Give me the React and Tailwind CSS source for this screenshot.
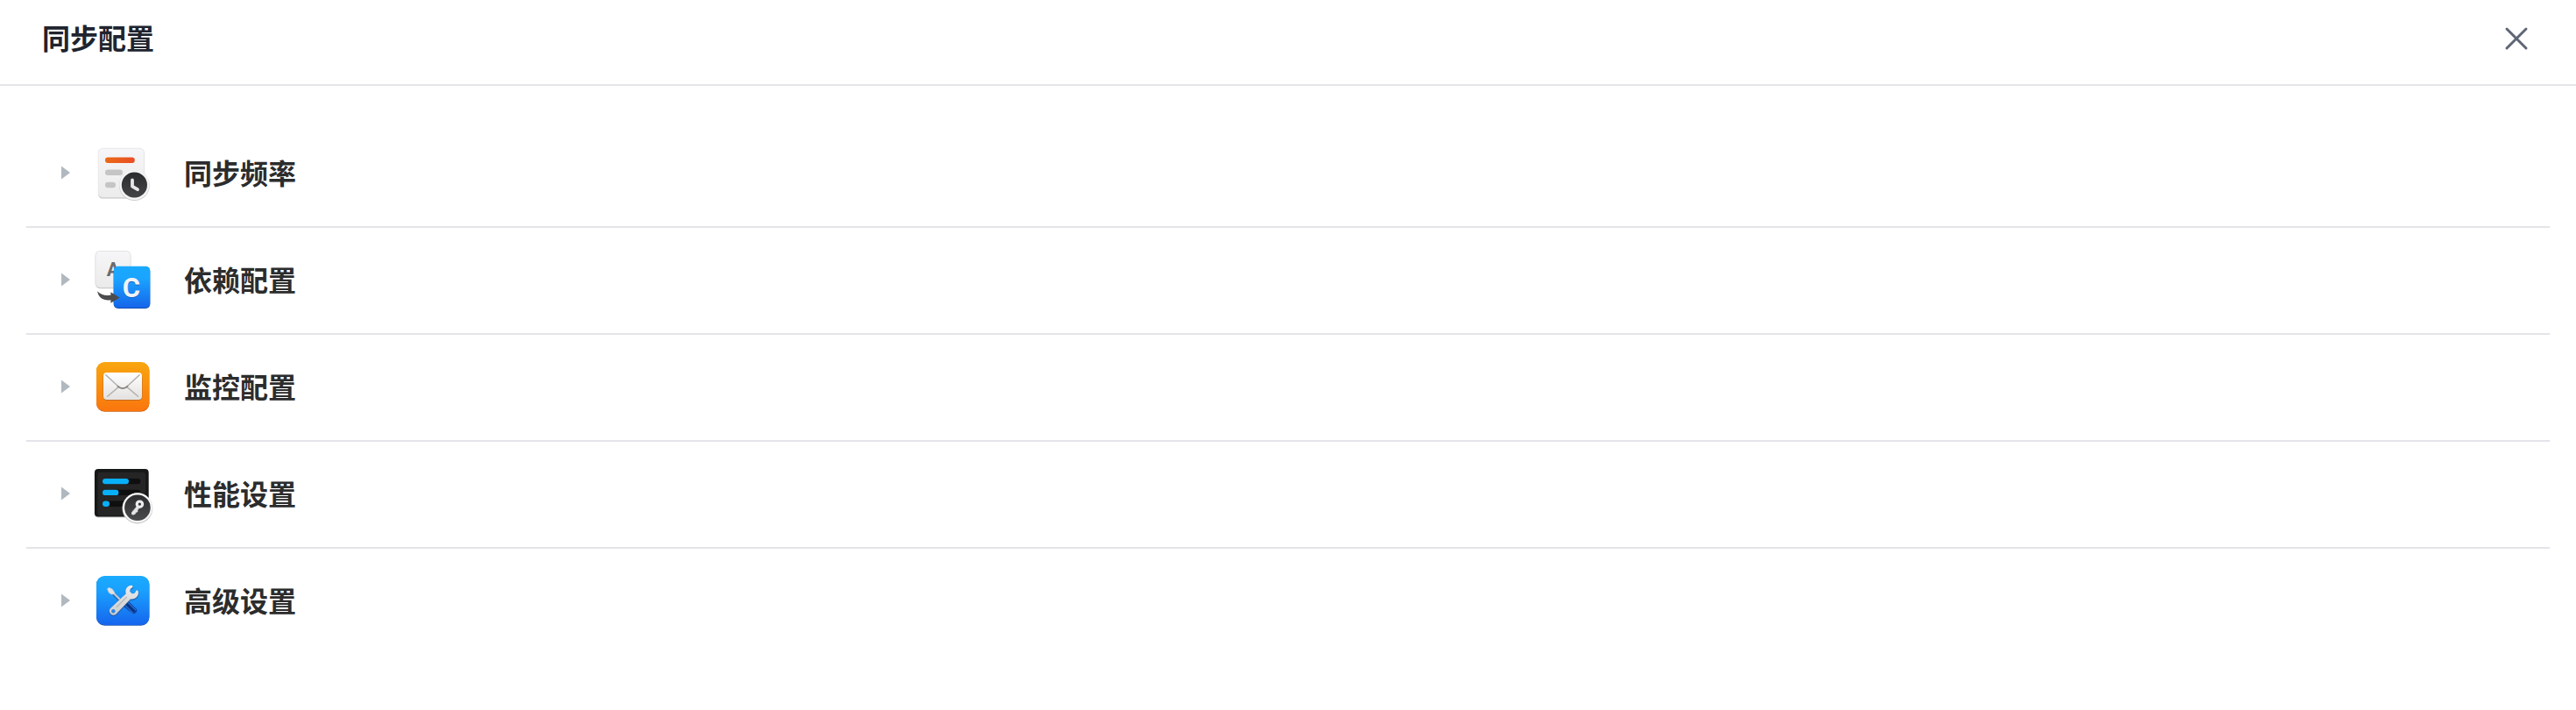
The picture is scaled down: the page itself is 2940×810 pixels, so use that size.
import { useState } from 'react';

function FrequencyIcon() {
  return (
    <svg viewBox="0 -2 80 80" className="size-20 shrink-0" aria-hidden="true">
      <defs>
        <linearGradient id="freq-page" x1="0" y1="0" x2="0" y2="1">
          <stop offset="0" stopColor="#f6f6f8" />
          <stop offset="1" stopColor="#ececec" />
        </linearGradient>
        <linearGradient id="freq-bar" x1="0" y1="0" x2="1" y2="0">
          <stop offset="0" stopColor="#ea6a17" />
          <stop offset="1" stopColor="#ea4e24" />
        </linearGradient>
        <linearGradient id="freq-clock" x1="0" y1="0" x2="0" y2="1">
          <stop offset="0" stopColor="#2b2c2e" />
          <stop offset="1" stopColor="#444547" />
        </linearGradient>
      </defs>
      <rect x="12" y="9.6" width="52.6" height="57" rx="5.5" fill="#c4c4c4" />
      <rect x="11.8" y="8.8" width="53" height="56.6" rx="5.5" fill="#e2e2e3" />
      <rect x="12.4" y="9.5" width="51.8" height="55.4" rx="5" fill="url(#freq-page)" />
      <rect x="20" y="19.6" width="33.8" height="6.4" rx="3.2" fill="url(#freq-bar)" />
      <rect x="20" y="33.5" width="20" height="6.4" rx="3.2" fill="#c5c5c5" />
      <rect x="20" y="47.8" width="12" height="6.4" rx="3.2" fill="#c5c5c5" />
      <circle cx="53.4" cy="51.6" r="17.4" fill="#d0d0d0" />
      <circle cx="53.4" cy="51" r="17" fill="#f5f5f5" />
      <circle cx="53.4" cy="51" r="14.6" fill="url(#freq-clock)" />
      <path d="M51 45.4V52.6L57 56.2" fill="none" stroke="#e6e6e6" strokeWidth="3.8" strokeLinecap="round" strokeLinejoin="round" />
    </svg>
  );
}

function DependencyIcon() {
  return (
    <svg viewBox="0 0 80 80" className="size-20 shrink-0" aria-hidden="true">
      <defs>
        <linearGradient id="dep-card" x1="0" y1="0" x2="0" y2="1">
          <stop offset="0" stopColor="#f6f6f8" />
          <stop offset="1" stopColor="#ebebeb" />
        </linearGradient>
        <linearGradient id="dep-blue" x1="0" y1="0" x2="0" y2="1">
          <stop offset="0" stopColor="#1aa9ff" />
          <stop offset="0.3" stopColor="#1aa4ff" />
          <stop offset="1" stopColor="#1565ea" />
        </linearGradient>
      </defs>
      <rect x="8.8" y="6.8" width="40.4" height="42.4" rx="5.5" fill="#c6c6c6" />
      <rect x="8.6" y="6" width="40.8" height="42.2" rx="5.5" fill="#dededf" />
      <rect x="9.3" y="6.7" width="39.4" height="41" rx="5" fill="url(#dep-card)" />
      <text x="29.2" y="35" textAnchor="middle" fontSize="22" fontWeight="700" fill="#6b6b6d" fontFamily="Roboto, sans-serif">
        A
      </text>
      <rect x="29.7" y="24.4" width="41.6" height="47.6" rx="5" fill="#1450b4" />
      <rect x="29.7" y="23.8" width="41.6" height="47.2" rx="5" fill="url(#dep-blue)" />
      <text x="50" y="60" textAnchor="middle" fontSize="31" fontWeight="700" fill="#1560c4" fontFamily="Roboto, sans-serif">
        C
      </text>
      <text x="50" y="59" textAnchor="middle" fontSize="31" fontWeight="700" fill="#f1f3f6" fontFamily="Roboto, sans-serif">
        C
      </text>
      <path
        d="M11.2 52.2C14.5 56 19 57.4 26.4 56.8V53.2L36.6 59.4L26.4 65.8V62.2C18.5 63.2 12.4 60.2 11.2 52.2Z"
        fill="#4c4c4e"
      />
    </svg>
  );
}

function MonitorIcon() {
  return (
    <svg viewBox="0 0 80 80" className="size-20 shrink-0" aria-hidden="true">
      <defs>
        <linearGradient id="mail-bg" x1="0" y1="0" x2="0" y2="1">
          <stop offset="0" stopColor="#f9a60f" />
          <stop offset="1" stopColor="#fa760e" />
        </linearGradient>
        <linearGradient id="mail-paper" x1="0" y1="0" x2="0" y2="1">
          <stop offset="0" stopColor="#ffffff" />
          <stop offset="1" stopColor="#e3e1e0" />
        </linearGradient>
      </defs>
      <rect x="10" y="11.6" width="60.4" height="56.2" rx="9.5" fill="#c96516" />
      <rect x="10" y="11" width="60.4" height="56" rx="9.5" fill="url(#mail-bg)" />
      <rect x="17.6" y="23.6" width="44.8" height="31.2" rx="4.5" fill="#b1662a" />
      <rect x="18" y="23" width="44" height="31" rx="4" fill="url(#mail-paper)" />
      <path d="M35.2 39.6L22.6 50.2M45 39.6L57.6 50.2" fill="none" stroke="#b5b1ae" strokeWidth="1.5" strokeLinecap="round" />
      <path d="M20.8 25.8L35.4 39.2Q40 42.6 44.6 39.2L59.2 25.8" fill="none" stroke="#b0adab" strokeWidth="1.4" strokeLinecap="round" />
      <path d="M34.4 38.6Q40 43.8 45.6 38.6" fill="none" stroke="#86827f" strokeWidth="1.6" strokeLinecap="round" />
    </svg>
  );
}

function PerformanceIcon() {
  return (
    <svg viewBox="0 0 80 80" className="size-20 shrink-0" aria-hidden="true">
      <defs>
        <linearGradient id="perf-badge" x1="0" y1="0" x2="0" y2="1">
          <stop offset="0" stopColor="#2c2d2f" />
          <stop offset="1" stopColor="#4a4b4d" />
        </linearGradient>
      </defs>
      <rect x="7.6" y="12" width="62.4" height="54.6" rx="4.5" fill="#cccccc" />
      <rect x="8" y="11" width="61.6" height="54.4" rx="4" fill="#161717" />
      <rect x="11.4" y="14.8" width="54.8" height="49.4" rx="3" fill="#252525" />
      <rect x="17" y="21.9" width="43.4" height="6.4" rx="3.2" fill="#0f0f0f" />
      <rect x="17" y="34.7" width="43.4" height="6.4" rx="3.2" fill="#0f0f0f" />
      <rect x="17" y="47.5" width="43.4" height="6.4" rx="3.2" fill="#0f0f0f" />
      <rect x="17" y="21.9" width="30" height="6.4" rx="3.2" fill="#08b0fa" />
      <rect x="17" y="34.7" width="18.4" height="6.4" rx="3.2" fill="#08b0fa" />
      <rect x="17" y="47.5" width="8" height="6.4" rx="3.2" fill="#08b0fa" />
      <circle cx="56.9" cy="56" r="17.4" fill="#c4c4c4" />
      <circle cx="56.9" cy="55.3" r="17" fill="#f7f7f7" />
      <circle cx="56.9" cy="55.3" r="14.8" fill="url(#perf-badge)" />
      <circle cx="59.4" cy="51.2" r="3.2" fill="none" stroke="#ececec" strokeWidth="3.2" />
      <path d="M56.6 53.4L58.8 55.4L56.8 58L57 60L54.8 60.2L54.8 61.8L52.2 63.2L50.4 62.6L50.6 60.4Z" fill="#e6e6e6" stroke="#e6e6e6" strokeWidth="0.8" strokeLinejoin="round" />
    </svg>
  );
}

function AdvancedIcon() {
  return (
    <svg viewBox="0 0 80 80" className="size-20 shrink-0" aria-hidden="true">
      <defs>
        <linearGradient id="adv-bg" x1="0" y1="0" x2="0" y2="1">
          <stop offset="0" stopColor="#1aabff" />
          <stop offset="0.3" stopColor="#1aa0fe" />
          <stop offset="1" stopColor="#1566ee" />
        </linearGradient>
        <linearGradient id="adv-steel" x1="0" y1="0" x2="0" y2="1">
          <stop offset="0" stopColor="#ececec" />
          <stop offset="1" stopColor="#cbccce" />
        </linearGradient>
      </defs>
      <rect x="10" y="11.6" width="60.4" height="56.2" rx="9.5" fill="#1c56b4" />
      <rect x="10" y="11" width="60.4" height="56" rx="9.5" fill="url(#adv-bg)" />
      {/* screwdriver */}
      <path d="M29 31L39 41" stroke="#2a68a8" strokeWidth="3.6" />
      <path d="M29 30L39 40" stroke="#c3ccd6" strokeWidth="2.2" />
      <path d="M22.6 25.8L24.4 24.6L28 26L30.6 29.8L30.2 31.6L27.6 32L24.4 30.2Z" fill="#e2e2e2" stroke="#c9d2da" strokeWidth="0.8" strokeLinejoin="round" />
      <path d="M40.6 45.4L46.4 39.6L56.4 49.4Q56.4 53.6 51.8 54.6Z" fill="#0c46a8" />
      <path d="M42.6 44.4L52 53.8M46 41.2L55.2 50.2" stroke="#3a7cd2" strokeWidth="1" />
      <path d="M44.2 42.8L53.4 51.8" stroke="#062c78" strokeWidth="1.5" />
      {/* wrench */}
      <path
        d="M50.6 21.8C45.4 21.6 42.2 26.2 43.6 31.4L26 48A4.7 4.7 0 0 0 32.6 54.6L48.8 37.4C54.2 38.4 59 34 57.8 28.6L56 27L53.4 31L50.6 31.2L48.2 28.8L48.8 26L51.8 23.6Z"
        fill="#2a568e"
        stroke="#2a568e"
        strokeWidth="1.2"
        opacity="0.65"
        transform="translate(0 0.8)"
      />
      <path
        d="M50.6 21.8C45.4 21.6 42.2 26.2 43.6 31.4L26 48A4.7 4.7 0 0 0 32.6 54.6L48.8 37.4C54.2 38.4 59 34 57.8 28.6L56 27L53.4 31L50.6 31.2L48.2 28.8L48.8 26L51.8 23.6Z"
        fill="url(#adv-steel)"
      />
      <path d="M44.4 35.2L33.4 46.4" stroke="#b9bbbe" strokeWidth="1.6" strokeLinecap="round" />
      <circle cx="29.3" cy="51.3" r="2.2" fill="#2a86e4" />
    </svg>
  );
}

const sections = [
  { id: 'frequency', title: '同步频率', Icon: FrequencyIcon },
  { id: 'dependency', title: '依赖配置', Icon: DependencyIcon },
  { id: 'monitor', title: '监控配置', Icon: MonitorIcon },
  { id: 'performance', title: '性能设置', Icon: PerformanceIcon },
  { id: 'advanced', title: '高级设置', Icon: AdvancedIcon },
];

function App() {
  const [openId, setOpenId] = useState(null);

  return (
    <div className="min-h-screen w-full bg-white font-['Noto_Sans_CJK_SC',sans-serif]">
      <header className="flex items-center justify-between border-b-2 border-[#e4e4ea] px-12 pt-[18px] pb-[26px]">
        <h1 className="pb-1 text-[32px] leading-12 font-bold text-[#20242e]">同步配置</h1>
        <button type="button" aria-label="关闭" className="flex size-10 cursor-pointer items-center justify-center">
          <svg viewBox="0 0 28 28" className="size-7" fill="none" stroke="#5f6575" strokeWidth="3" strokeLinecap="round">
            <path d="M3 3L25 25M25 3L3 25" />
          </svg>
        </button>
      </header>

      <main className="px-[30px] py-10">
        <ul className="divide-y-2 divide-[#e4e4ea]">
          {sections.map(({ id, title, Icon }) => (
            <li key={id}>
              <button
                type="button"
                aria-expanded={openId === id}
                onClick={() => setOpenId(openId === id ? null : id)}
                className="flex w-full cursor-pointer items-center py-5 pl-10 text-left"
              >
                <svg viewBox="0 0 10 18" className="mr-5 h-[18px] w-2.5 shrink-0" aria-hidden="true">
                  <path d="M0 0.5L10 8L0 15.5Z" fill="#b0b8c0" />
                </svg>
                <Icon />
                <span className="ml-[30px] pb-1 text-[32px] leading-12 font-bold text-[#2c2c2c]">{title}</span>
              </button>
            </li>
          ))}
        </ul>
      </main>
    </div>
  );
}

export default App;
